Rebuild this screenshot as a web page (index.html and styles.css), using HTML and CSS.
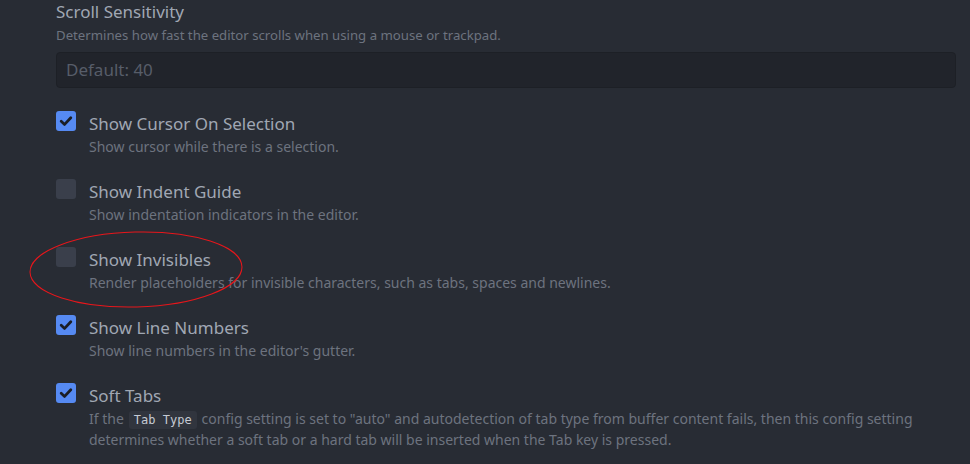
FILE: index.html
```html
<!DOCTYPE html>
<html>
<head>
<meta charset="utf-8">
<link rel="stylesheet" href="styles.css">
</head>
<body>
<div class="panel">
  <div class="setting">
    <div class="title">Scroll Sensitivity</div>
    <div class="desc">Determines how fast the editor scrolls when using a mouse or trackpad.</div>
    <div class="input">Default: 40</div>
  </div>

  <div class="check-row">
    <span class="box on"><svg viewBox="0 0 20 20" width="20" height="20"><path d="M5.2 10.2 L8.6 13.4 L14.8 6.8" fill="none" stroke="#1b1e25" stroke-width="2.8" stroke-linecap="round" stroke-linejoin="round"/></svg></span>
    <div class="texts">
      <div class="label">Show Cursor On Selection</div>
      <div class="desc">Show cursor while there is a selection.</div>
    </div>
  </div>

  <div class="check-row">
    <span class="box"></span>
    <div class="texts">
      <div class="label">Show Indent Guide</div>
      <div class="desc">Show indentation indicators in the editor.</div>
    </div>
  </div>

  <div class="check-row">
    <span class="box"></span>
    <div class="texts">
      <div class="label">Show Invisibles</div>
      <div class="desc">Render placeholders for invisible characters, such as tabs, spaces and newlines.</div>
    </div>
  </div>

  <div class="check-row">
    <span class="box on"><svg viewBox="0 0 20 20" width="20" height="20"><path d="M5.2 10.2 L8.6 13.4 L14.8 6.8" fill="none" stroke="#1b1e25" stroke-width="2.8" stroke-linecap="round" stroke-linejoin="round"/></svg></span>
    <div class="texts">
      <div class="label">Show Line Numbers</div>
      <div class="desc">Show line numbers in the editor's gutter.</div>
    </div>
  </div>

  <div class="check-row">
    <span class="box on"><svg viewBox="0 0 20 20" width="20" height="20"><path d="M5.2 10.2 L8.6 13.4 L14.8 6.8" fill="none" stroke="#1b1e25" stroke-width="2.8" stroke-linecap="round" stroke-linejoin="round"/></svg></span>
    <div class="texts">
      <div class="label">Soft Tabs</div>
      <div class="desc">If the<code>Tab Type</code>config setting is set to "auto" and autodetection of tab type from buffer content fails, then this config setting determines whether a soft tab or a hard tab will be inserted when the Tab key is pressed.</div>
    </div>
  </div>
</div>
<svg class="annot" width="970" height="464" viewBox="0 0 970 464">
  <ellipse cx="136" cy="269.5" rx="106" ry="37.5" transform="rotate(-1.5 136 269.5)" fill="none" stroke="#e8161b" stroke-width="1"/>
</svg>
</body>
</html>
```

FILE: styles.css
```css
html, body {
  margin: 0;
  padding: 0;
  background: #282c34;
  width: 970px;
  height: 464px;
  overflow: hidden;
  font-family: "Noto Sans", "Open Sans", "Liberation Sans", sans-serif;
}
.panel {
  padding: 0 14px 0 56px;
  display: flex;
  flex-direction: column;
  gap: 23px;
}
.title, .label {
  font-size: 17px;
  line-height: 24px;
  color: #a0a7b3;
}
.desc {
  font-size: 13.2px;
  line-height: 21px;
  color: #6d737f;
}
.texts .desc {
  font-size: 14px;
  max-width: 850px;
}
.setting .desc {
  margin-top: 1px;
}
.input {
  margin-top: 6px;
  height: 34px;
  border: 1px solid #1d2026;
  border-radius: 4px;
  background: #21242b;
  color: #575d69;
  font-size: 17px;
  line-height: 34px;
  padding-left: 9px;
}
.setting {
  margin-bottom: 1px;
}
.check-row {
  display: flex;
  gap: 13px;
  align-items: flex-start;
}
.box {
  flex: none;
  width: 20px;
  height: 20px;
  border-radius: 3px;
  background: #3a3f4b;
  margin-top: -1px;
  display: block;
}
.box.on {
  background: #568af2;
}
.box svg {
  display: block;
}
.texts {
  flex: 1;
}
code {
  display: inline-block;
  font-family: "DejaVu Sans Mono", "Liberation Mono", monospace;
  font-size: 12px;
  line-height: 18px;
  color: #c5cad3;
  background: #31353e;
  border-radius: 3px;
  padding: 0 5px;
  margin: 0 5px 0 5px;
  vertical-align: 0;
}
.annot {
  position: absolute;
  left: 0;
  top: 0;
  pointer-events: none;
}
```
